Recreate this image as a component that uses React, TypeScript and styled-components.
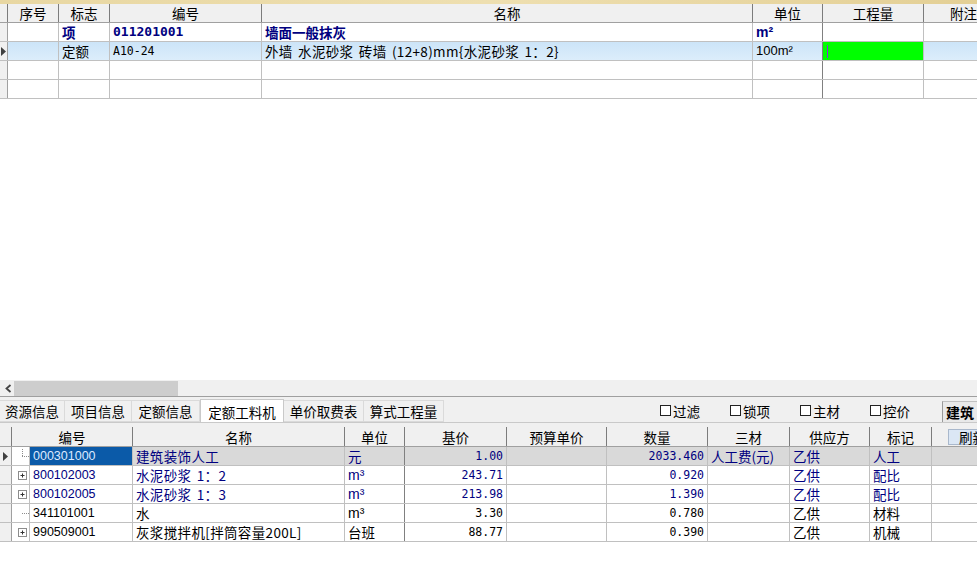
import styled, { createGlobalStyle } from 'styled-components'

const GlobalStyle = createGlobalStyle`
  html, body { margin: 0; padding: 0; background: #ffffff; }
  body {
    font-family: 'Noto Sans CJK SC', 'Liberation Sans', sans-serif;
    font-size: 13.5px;
    color: #000;
    overflow: hidden;
  }
  * { box-sizing: border-box; }
`

const NAVY = '#000080'
const TOP_COLS = '8px 51px 51px 152px 491px 70px 101px 80px'
const BOT_COLS = '12px 18px 103px 212px 60px 102px 100px 101px 82px 80px 62px 60px'

const fonts = {
  cjk: "'Noto Sans CJK SC', sans-serif",
  mono: "'DejaVu Sans Mono', 'Noto Sans CJK SC', monospace",
  sans: "'Liberation Sans', 'Noto Sans CJK SC', sans-serif",
}

type Font = keyof typeof fonts

const Window = styled.div`
  width: 977px;
  height: 564px;
  display: flex;
  flex-direction: column;
  overflow: hidden;
  background: #fff;
`

const TitleStrip = styled.div`
  height: 4px;
  flex-shrink: 0;
  background: linear-gradient(90deg, #e8d7a2 0%, #eedfb0 50%, #e3cf95 100%);
`

const TopPane = styled.div`
  height: 376px;
  flex-shrink: 0;
  overflow: hidden;
  background: #fff;
`

const Row = styled.div<{ $cols: string; $h: number; $bg?: string; $line?: string }>`
  display: grid;
  grid-template-columns: ${p => p.$cols};
  height: ${p => p.$h}px;
  background: ${p => p.$bg || '#fff'};
  border-bottom: 1px solid ${p => p.$line || '#c0c0c0'};
  width: max-content;
  min-width: 100%;
`

const HeadCell = styled.div<{ $span?: number }>`
  grid-column: span ${p => p.$span || 1};
  display: flex;
  align-items: center;
  justify-content: center;
  background: #f0f0f0;
  border-right: 1px solid #7c7c7c;
  font-size: 13.5px;
  line-height: 16px;
  white-space: nowrap;
  overflow: hidden;
`

const Cell = styled.div<{
  $align?: 'left' | 'right' | 'center'
  $bold?: boolean
  $color?: string
  $bg?: string
  $edge?: boolean
  $font?: Font
  $size?: number
  $spread?: boolean
}>`
  display: flex;
  align-items: center;
  justify-content: ${p => (p.$align === 'right' ? 'flex-end' : p.$align === 'center' ? 'center' : 'flex-start')};
  padding: 0 3px;
  background: ${p => p.$bg || 'transparent'};
  color: ${p => p.$color || '#000'};
  font-family: ${p => fonts[p.$font || 'cjk']};
  font-size: ${p => p.$size || 13.5}px;
  font-weight: ${p => (p.$bold ? 700 : 400)};
  letter-spacing: ${p => (p.$spread ? 0.35 : 0)}px;
  word-spacing: ${p => (p.$spread ? 2 : 0)}px;
  line-height: 16px;
  border-right: 1px solid ${p => (p.$edge ? '#808080' : '#c0c0c0')};
  white-space: pre;
  overflow: hidden;
`

const Indicator = styled.div`
  display: flex;
  align-items: center;
  justify-content: center;
  background: #f0f0f0;
  border-right: 1px solid #a0a0a0;
`

const Caret = styled.span`
  display: inline-block;
  width: 1px;
  height: 13px;
  background: #8a2be2;
  margin-left: 1px;
`

const Pointer = () => (
  <svg width="5" height="9" viewBox="0 0 5 9">
    <polygon points="0,0 5,4.5 0,9" fill="#404040" />
  </svg>
)

const HScroll = styled.div`
  height: 16px;
  flex-shrink: 0;
  display: flex;
  align-items: center;
  background: #f0f0f0;
  padding-left: 2px;
`

const ScrollArrow = styled.div`
  width: 12px;
  display: flex;
  align-items: center;
  justify-content: center;
`

const ScrollThumb = styled.div`
  width: 164px;
  height: 15px;
  background: #cdcdcd;
`

const Divider = styled.div`
  height: 2px;
  flex-shrink: 0;
  background: #f0f0f0;
  border-top: 1px solid #9f9f9f;
`

const TabBar = styled.div`
  height: 28px;
  flex-shrink: 0;
  background: #f0f0f0;
  display: flex;
  align-items: flex-start;
`

const Tabs = styled.div`
  display: flex;
  height: 25px;
  padding-top: 1px;
  border-bottom: 1px solid #c9c9c9;
  width: 100%;
  align-items: flex-end;
  overflow: hidden;
`

const Tab = styled.div<{ $w: number; $active?: boolean }>`
  width: ${p => p.$w}px;
  flex-shrink: 0;
  height: ${p => (p.$active ? 24 : 22)}px;
  margin-bottom: ${p => (p.$active ? -1 : 0)}px;
  display: flex;
  align-items: center;
  justify-content: center;
  background: ${p => (p.$active ? '#ffffff' : '#f0f0f0')};
  border: 1px solid ${p => (p.$active ? '#c9c9c9' : '#dadada')};
  border-bottom: ${p => (p.$active ? 'none' : '1px solid #dadada')};
  border-left: ${p => (p.$active ? '1px solid #c9c9c9' : 'none')};
  font-size: 13.5px;
  line-height: 16px;
  white-space: nowrap;
`

const Checks = styled.div`
  display: flex;
  margin-left: 216px;
  flex-shrink: 0;
  align-self: center;
`

const Check = styled.label`
  width: 70px;
  display: flex;
  align-items: center;
  gap: 2px;
  font-size: 13.5px;
  line-height: 16px;
  white-space: nowrap;
`

const Box = styled.span`
  width: 11px;
  height: 11px;
  border: 1px solid #222;
  background: #fff;
  display: inline-block;
`

const SectionTag = styled.div`
  margin-left: 2px;
  flex-shrink: 0;
  width: 60px;
  height: 21px;
  display: flex;
  align-items: center;
  padding-left: 3px;
  background: #e9e9e9;
  border-left: 1px solid #9a9a9a;
  border-top: 1px solid #c0c0c0;
  font-weight: 700;
  font-size: 14px;
`

const BottomPane = styled.div`
  flex: 1;
  overflow: hidden;
  background: #fff;
  border-top: 1px solid #f0f0f0;
`

const RefreshCell = styled.div`
  display: flex;
  align-items: center;
  padding-left: 16px;
  background: #f0f0f0;
`

const RefreshButton = styled.div`
  width: 50px;
  height: 16px;
  display: flex;
  align-items: center;
  padding-left: 10px;
  background: #dbe7f5;
  border: 1px solid #a9b8cc;
  font-size: 13.5px;
  line-height: 14px;
  white-space: nowrap;
  flex-shrink: 0;
`

const TreeCell = styled.div`
  display: flex;
  align-items: center;
  border-right: 1px solid #c0c0c0;
  background: #fff;
`

const TreeMark = ({ kind }: { kind: 'plus' | 'leaf' | 'first' }) => (
  <svg width="17" height="18" viewBox="0 0 17 18">
    {kind === 'plus' ? (
      <>
        <rect x="6.5" y="5.5" width="8" height="8" fill="#fff" stroke="#8c8c8c" />
        <line x1="8.5" y1="9.5" x2="12.5" y2="9.5" stroke="#333" />
        <line x1="10.5" y1="7.5" x2="10.5" y2="11.5" stroke="#333" />
      </>
    ) : (
      <>
        {kind === 'first' && (
          <line x1="10.5" y1="2" x2="10.5" y2="9" stroke="#8c8c8c" strokeDasharray="1 1" />
        )}
        <line x1="10" y1="9.5" x2="18" y2="9.5" stroke="#8c8c8c" strokeDasharray="1 1" />
      </>
    )}
  </svg>
)

type Item = {
  tree: 'plus' | 'leaf' | 'first'
  code: string
  name: string
  unit: string
  base: string
  qty: string
  mat: string
  supply: string
  tag: string
  navy: boolean
}

const items: Item[] = [
  { tree: 'first', code: '000301000', name: '建筑装饰人工', unit: '元', base: '1.00', qty: '2033.460', mat: '人工费(元)', supply: '乙供', tag: '人工', navy: true },
  { tree: 'plus', code: '800102003', name: '水泥砂浆 1：2', unit: 'm³', base: '243.71', qty: '0.920', mat: '', supply: '乙供', tag: '配比', navy: true },
  { tree: 'plus', code: '800102005', name: '水泥砂浆 1：3', unit: 'm³', base: '213.98', qty: '1.390', mat: '', supply: '乙供', tag: '配比', navy: true },
  { tree: 'leaf', code: '341101001', name: '水', unit: 'm³', base: '3.30', qty: '0.780', mat: '', supply: '乙供', tag: '材料', navy: false },
  { tree: 'plus', code: '990509001', name: '灰浆搅拌机[拌筒容量200L]', unit: '台班', base: '88.77', qty: '0.390', mat: '', supply: '乙供', tag: '机械', navy: false },
]

const tabs = [
  { label: '资源信息', w: 65 },
  { label: '项目信息', w: 67 },
  { label: '定额信息', w: 68 },
  { label: '定额工料机', w: 84, active: true },
  { label: '单价取费表', w: 80 },
  { label: '算式工程量', w: 80 },
]

const App = () => {
  return (
    <Window>
      <GlobalStyle />
      <TitleStrip />
      <TopPane>
        <Row $cols={TOP_COLS} $h={19} $bg="#f0f0f0" $line="#a0a0a0">
          <HeadCell />
          <HeadCell>序号</HeadCell>
          <HeadCell>标志</HeadCell>
          <HeadCell>编号</HeadCell>
          <HeadCell>名称</HeadCell>
          <HeadCell>单位</HeadCell>
          <HeadCell>工程量</HeadCell>
          <HeadCell>附注</HeadCell>
        </Row>
        <Row $cols={TOP_COLS} $h={19}>
          <Indicator />
          <Cell />
          <Cell $bold $color={NAVY}>项</Cell>
          <Cell $bold $color={NAVY} $font="mono" $size={13}>011201001</Cell>
          <Cell $bold $color={NAVY}>墙面一般抹灰</Cell>
          <Cell $bold $color={NAVY} $edge $font="sans" $size={14}>m²</Cell>
          <Cell />
          <Cell />
        </Row>
        <Row $cols={TOP_COLS} $h={19} $bg="linear-gradient(180deg, #cce4f8 0%, #dcedfb 100%)">
          <Indicator><Pointer /></Indicator>
          <Cell />
          <Cell>定额</Cell>
          <Cell $font="mono" $size={11.5}>A10-24</Cell>
          <Cell $spread>外墙 水泥砂浆 砖墙 (12+8)mm{'{'}水泥砂浆 1：2{'}'}</Cell>
          <Cell $edge $font="sans" $size={13}>100m²</Cell>
          <Cell $bg="#00ff00"><Caret /></Cell>
          <Cell />
        </Row>
        <Row $cols={TOP_COLS} $h={19}>
          <Indicator />
          <Cell /><Cell /><Cell /><Cell /><Cell $edge /><Cell /><Cell />
        </Row>
        <Row $cols={TOP_COLS} $h={19}>
          <Indicator />
          <Cell /><Cell /><Cell /><Cell /><Cell $edge /><Cell /><Cell />
        </Row>
      </TopPane>
      <HScroll>
        <ScrollArrow>
          <svg width="7" height="9" viewBox="0 0 7 9">
            <polyline points="5.5,1 1.5,4.5 5.5,8" fill="none" stroke="#444" strokeWidth="1.8" />
          </svg>
        </ScrollArrow>
        <ScrollThumb />
      </HScroll>
      <Divider />
      <TabBar>
        <Tabs>
          {tabs.map(t => (
            <Tab key={t.label} $w={t.w} $active={t.active}>{t.label}</Tab>
          ))}
          <Checks>
            {['过滤', '锁项', '主材', '控价'].map(c => (
              <Check key={c}><Box />{c}</Check>
            ))}
          </Checks>
          <SectionTag>建筑</SectionTag>
        </Tabs>
      </TabBar>
      <BottomPane>
        <Row $cols={BOT_COLS} $h={20} $bg="#f0f0f0" $line="#a0a0a0">
          <HeadCell />
          <HeadCell $span={2}>编号</HeadCell>
          <HeadCell>名称</HeadCell>
          <HeadCell>单位</HeadCell>
          <HeadCell>基价</HeadCell>
          <HeadCell>预算单价</HeadCell>
          <HeadCell>数量</HeadCell>
          <HeadCell>三材</HeadCell>
          <HeadCell>供应方</HeadCell>
          <HeadCell>标记</HeadCell>
          <RefreshCell><RefreshButton>刷新</RefreshButton></RefreshCell>
        </Row>
        {items.map((it, i) => {
          const color = it.navy ? NAVY : '#000'
          const sel = i === 0
          const metric = it.unit.startsWith('m')
          return (
            <Row key={it.code} $cols={BOT_COLS} $h={19} $bg={sel ? '#d9d9d9' : '#fff'}>
              <Indicator>{sel && <Pointer />}</Indicator>
              <TreeCell><TreeMark kind={it.tree} /></TreeCell>
              <Cell
                $font="sans"
                $size={12.5}
                $color={sel ? '#dce9ff' : color}
                $bg={sel ? '#0b5aa8' : undefined}
              >
                {it.code}
              </Cell>
              <Cell $color={color} $spread>{it.name}</Cell>
              <Cell $color={color} $edge $font={metric ? 'sans' : 'cjk'} $size={metric ? 14 : 13.5}>{it.unit}</Cell>
              <Cell $align="right" $color={color} $font="mono" $size={11.5}>{it.base}</Cell>
              <Cell />
              <Cell $align="right" $color={color} $font="mono" $size={11.5}>{it.qty}</Cell>
              <Cell $color={color}>{it.mat}</Cell>
              <Cell $color={color}>{it.supply}</Cell>
              <Cell $color={color}>{it.tag}</Cell>
              <Cell />
            </Row>
          )
        })}
      </BottomPane>
    </Window>
  )
}

export default App
